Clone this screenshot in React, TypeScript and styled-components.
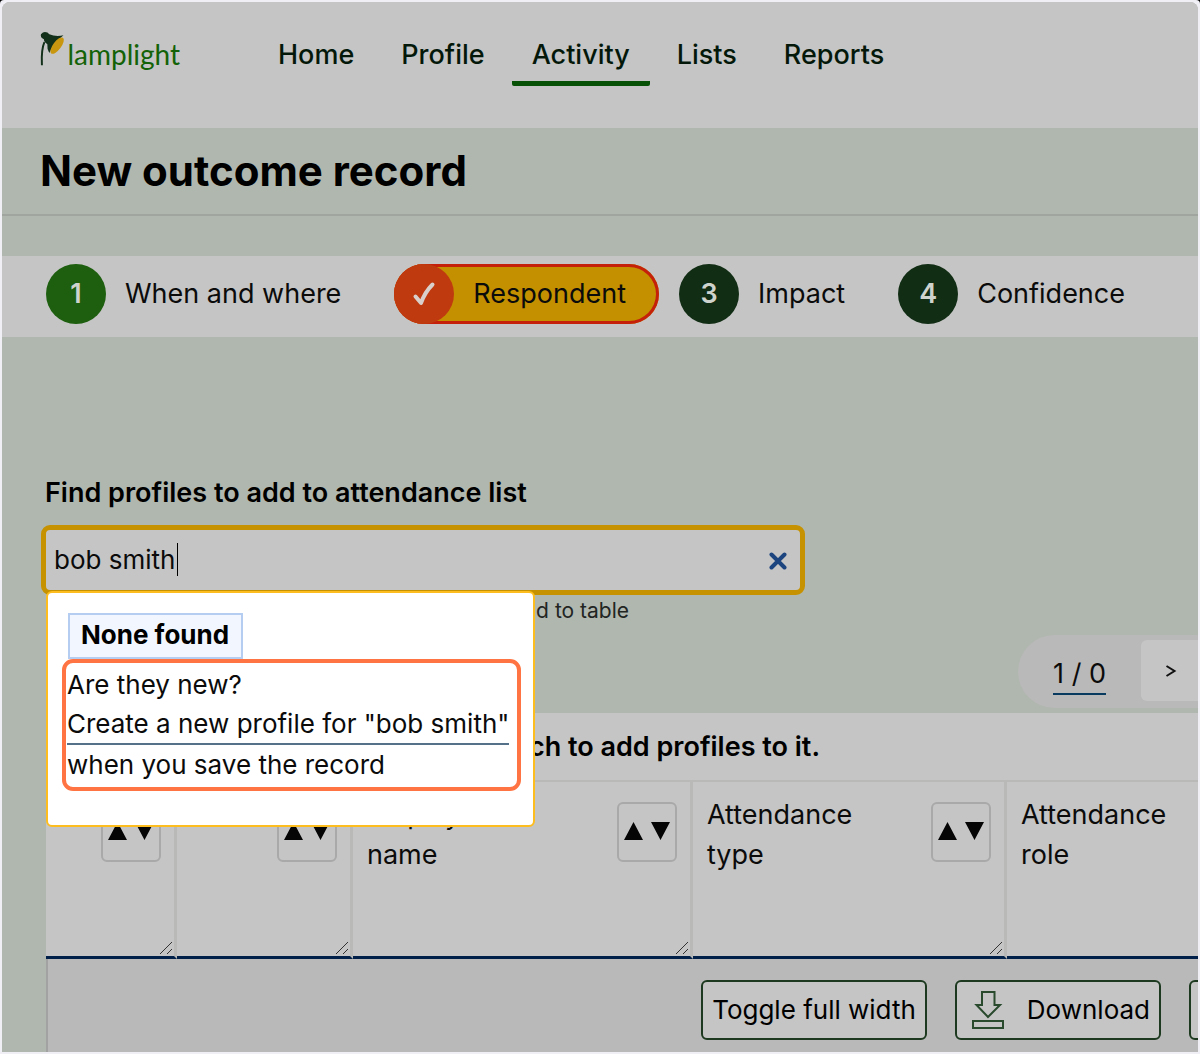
import React from "react";
import styled, { createGlobalStyle } from "styled-components";

const surface = "#c5c5c5";
const sage = "#b0b7af";
const shade = "#b9b9b9";

const GlobalStyle = createGlobalStyle`
  *, *::before, *::after { box-sizing: border-box; }
  body {
    margin: 0;
    background: #000;
    color: #0b0b0b;
    font-family: Inter, "Noto Sans", sans-serif;
    font-size: 26px;
    line-height: 40px;
  }
  button, input { font: inherit; color: inherit; }
  a { color: inherit; text-decoration: none; }
`;

const Frame = styled.div`
  min-height: 100vh;
  padding: 2px;
  display: flex;
  flex-direction: column;
  background: #efeff5;
  border-radius: 4px 4px 0 0;
`;

const Page = styled.div`
  flex: 1;
  display: flex;
  flex-direction: column;
  overflow: hidden;
  background: ${sage};
  border-radius: 8px 8px 0 0;
`;

const Header = styled.header`
  display: flex;
  height: 126px;
  padding: 28px 38px 0;
  gap: 78px;
  background: ${surface};
`;

const Logo = styled.a`
  display: flex;
  align-items: flex-start;
  height: 44px;
  width: 140px;
  color: #136207;
  font-family: Lato, sans-serif;
  font-size: 28px;
  line-height: 48px;
`;

const Nav = styled.nav`
  display: flex;
  align-items: flex-start;
  gap: 7px;
`;

const NavLink = styled.a<{ $active?: boolean }>`
  height: 56px;
  padding: 5px 20px 0;
  border-bottom: 5px solid ${(p) => (p.$active ? "#075107" : "transparent")};
  border-radius: 2px;
  color: #04180a;
  font-size: 27px;
  font-weight: 500;
`;

const TitleBar = styled.div`
  height: 88px;
  padding: 17px 38px;
  border-bottom: 2px solid #a1a5a0;
`;

const Title = styled.h1`
  margin: 0;
  color: #000;
  font-size: 42px;
  line-height: 52px;
  font-weight: 700;
`;

const Steps = styled.ol`
  display: flex;
  gap: 20px;
  height: 81px;
  margin: 40px 0 0;
  padding: 8px 44px 0;
  background: ${surface};
  font-size: 27px;
  list-style: none;
`;

const Step = styled.li<{ $current?: boolean }>`
  display: flex;
  align-items: center;
  flex: none;
  gap: 19px;
  height: 60px;
  padding-right: 33px;
  border-radius: 30px;
  background: ${(p) => (p.$current ? "#c49000" : "transparent")};
  box-shadow: ${(p) => (p.$current ? "inset 0 0 0 3px #c4200a" : "none")};
`;

const StepMark = styled.span<{ $tone: string }>`
  display: flex;
  align-items: center;
  justify-content: center;
  width: 60px;
  height: 60px;
  border-radius: 50%;
  background: ${(p) => p.$tone};
  color: #cfd3cd;
  font-weight: 600;
`;

const Search = styled.section`
  display: flex;
  flex-direction: column;
  align-items: flex-start;
  padding: 136px 39px 0;
`;

const FieldLabel = styled.label`
  padding-left: 4px;
  color: #000;
  font-size: 27px;
  font-weight: 600;
`;

const Field = styled.div`
  position: relative;
  width: 764px;
  max-width: 100%;
  margin-top: 12px;
`;

const TextBox = styled.input`
  display: block;
  width: 100%;
  height: 70px;
  padding: 0 60px 2px 8px;
  border: 5px solid #c69200;
  border-radius: 9px;
  outline: none;
  background: ${surface};
`;

const Caret = styled.span`
  position: absolute;
  left: 136px;
  top: 18px;
  width: 1px;
  height: 33px;
  background: #000;
`;

const Clear = styled.button`
  position: absolute;
  right: 12px;
  top: 21px;
  display: flex;
  align-items: center;
  justify-content: center;
  width: 30px;
  height: 30px;
  padding: 0;
  border: 0;
  background: none;
`;

const Popup = styled.div`
  position: absolute;
  z-index: 2;
  left: 5px;
  top: 66px;
  width: 489px;
  padding: 20px 12px 34px 14px;
  border: 2px solid #fdbd1e;
  border-radius: 6px;
  background: #fff;
`;

const Badge = styled.strong`
  display: block;
  width: fit-content;
  margin-left: 6px;
  padding: 0 12px 2px 11px;
  border: 2px solid #b5cdf0;
  background: #f1f6ff;
  color: #000;
  font-weight: 700;
`;

const Prompt = styled.div`
  padding: 2px 0 2px 1px;
  border: 4px solid #ff7442;
  border-radius: 11px;
  white-space: nowrap;
`;

const PromptLink = styled.a`
  display: block;
  width: fit-content;
  border-bottom: 2px solid #557089;
  line-height: 38px;
`;

const Hint = styled.p`
  width: 588px;
  margin: 0;
  color: #222522;
  font-size: 21px;
  line-height: 32px;
  text-align: right;
`;

const PagerRow = styled.div`
  display: flex;
  justify-content: flex-end;
  margin-top: 8px;
`;

const Pager = styled.div`
  display: flex;
  align-items: flex-start;
  gap: 35px;
  height: 73px;
  padding: 5px 0 0 35px;
  border-radius: 37px 0 0 37px;
  background: ${shade};
`;

const PageCount = styled.a`
  margin-top: 15px;
  border-bottom: 2px solid #073a5e;
  font-size: 27px;
  line-height: 38px;
`;

const Next = styled.button`
  display: flex;
  align-items: center;
  width: 57px;
  height: 61px;
  padding: 0 0 0 24px;
  border: 0;
  border-radius: 6px 0 0 6px;
  background: ${surface};
`;

const TablePanel = styled.section`
  flex: 1;
  display: flex;
  flex-direction: column;
  margin: 5px 0 0 44px;
  overflow: hidden;
  background: ${surface};
`;

const Table = styled.table`
  width: 1300px;
  table-layout: fixed;
  border-collapse: separate;
  border-spacing: 0;
`;

const Caption = styled.caption`
  height: 67px;
  width: 774px;
  padding-top: 14px;
  color: #000;
  font-size: 27px;
  font-weight: 600;
  text-align: right;
`;

const HeadCell = styled.th<{ $width: number }>`
  position: relative;
  width: ${(p) => p.$width}px;
  height: 179px;
  padding: 13px 13px 0 14px;
  border-top: 2px solid #b9b9b7;
  border-right: 3px solid #b9b9b7;
  border-bottom: 3px solid #00204a;
  font-size: 27px;
  font-weight: 400;
  text-align: left;
  vertical-align: top;
`;

const HeadContent = styled.div`
  display: flex;
  justify-content: space-between;
`;

const HeadLabel = styled.span`
  max-width: 160px;
`;

const Sort = styled.button`
  flex: none;
  width: 60px;
  height: 60px;
  margin-top: 7px;
  padding: 0;
  border: 2px solid #a9a9a9;
  border-radius: 6px;
  background: none;
`;

const Grip = styled.svg`
  position: absolute;
  right: 1px;
  bottom: 1px;
`;

const Toolbar = styled.div`
  flex: 1;
  display: flex;
  justify-content: flex-end;
  gap: 28px;
  min-height: 93px;
  padding: 21px 0 12px;
  border-left: 2px solid #a2a2a2;
  background: ${shade};
`;

const ToolButton = styled.button<{ $cut?: boolean }>`
  display: flex;
  align-items: center;
  flex: none;
  gap: 23px;
  height: 60px;
  min-width: 60px;
  margin-right: ${(p) => (p.$cut ? "-51px" : "0")};
  padding: 0 9px;
  border: 2px solid #1d3a20;
  border-radius: 6px;
  background: ${surface};
  color: #000;
`;

const LampIcon = () => (
  <svg width="28" height="42" viewBox="0 0 28 42" aria-hidden="true">
    <path d="M4.500 12 C1 20 1.800 30 2 35.500" fill="none" stroke="#12301a" strokeWidth="2" />
    <path d="M1 4 Q3 1.500 5 1.500 Q8 1.500 9.500 4 Q16 6.500 24 5 Q19 9 15 14 Q11 19 9.500 23 Q7 19 7.500 14 Q4 12 4 9 Q0 7.500 1 4Z" fill="#12301a" />
    <ellipse cx="17.500" cy="15.500" rx="10" ry="4.200" transform="rotate(-53 17.500 15.500)" fill="#c8960f" />
  </svg>
);

const SortIcon = () => (
  <svg width="56" height="56" viewBox="0 0 56 56" aria-hidden="true" style={{ display: "block" }}>
    <path d="M5 36 L14.5 18 L24 36Z M32 18 H51 L41.5 36Z" fill="#050505" />
  </svg>
);

const DownloadIcon = () => (
  <svg width="32" height="40" viewBox="0 0 32 40" fill="none" stroke="#294a2d" strokeWidth="2" aria-hidden="true" style={{ marginLeft: 6 }}>
    <path d="M10 2 H22.5 V15 H28 L16 27 L4.500 15 H10Z M1 31 H31 V38 H1Z" />
  </svg>
);

const links = ["Home", "Profile", "Activity", "Lists", "Reports"];

const columns = [
  { label: "ID", width: 131 },
  { label: "Photo", width: 176 },
  { label: "Display name", width: 340 },
  { label: "Attendance type", width: 314 },
  { label: "Attendance role", width: 339 },
];

export default function App() {
  return (
    <Frame>
      <GlobalStyle />
      <Page>
        <Header>
          <Logo href="#">
            <LampIcon />
            lamplight
          </Logo>
          <Nav>
            {links.map((name) => (
              <NavLink key={name} href="#" $active={name === "Activity"}>
                {name}
              </NavLink>
            ))}
          </Nav>
        </Header>
        <TitleBar>
          <Title>New outcome record</Title>
        </TitleBar>
        <Steps>
          <Step>
            <StepMark $tone="#1d5f0f">1</StepMark>
            When and where
          </Step>
          <Step $current>
            <StepMark $tone="#bf3a0f">
              <svg width="24" height="26" viewBox="0 0 24 26" aria-hidden="true">
                <path d="M3.500 15.500 L9 22 Q13 11 20.500 3.500" fill="none" stroke="#d9d0cb" strokeWidth="4" strokeLinecap="round" strokeLinejoin="round" />
              </svg>
            </StepMark>
            Respondent
          </Step>
          <Step>
            <StepMark $tone="#112d14">3</StepMark>
            Impact
          </Step>
          <Step>
            <StepMark $tone="#112d14">4</StepMark>
            Confidence
          </Step>
        </Steps>
        <Search>
          <FieldLabel htmlFor="find">Find profiles to add to attendance list</FieldLabel>
          <Field>
            <TextBox id="find" type="text" defaultValue="bob smith" />
            <Caret />
            <Clear type="button" aria-label="Clear">
              <svg width="18" height="18" viewBox="0 0 18 18" aria-hidden="true">
                <path d="M2.500 2.500 L15.500 15.500 M15.500 2.500 L2.500 15.500" stroke="#1c447f" strokeWidth="4" strokeLinecap="round" />
              </svg>
            </Clear>
            <Popup>
              <Badge>None found</Badge>
              <Prompt>
                <div>Are they new?</div>
                <PromptLink href="#">Create a new profile for "bob smith"</PromptLink>
                <div>when you save the record</div>
              </Prompt>
            </Popup>
          </Field>
          <Hint>Search and add to table</Hint>
        </Search>
        <PagerRow>
          <Pager>
            <PageCount href="#">1 / 0</PageCount>
            <Next type="button" aria-label="Next page">
              <svg width="12" height="14" viewBox="0 0 12 14" fill="none" stroke="#111" strokeWidth="2" aria-hidden="true">
                <path d="M1.500 2 L9.500 7 L1.500 12" />
              </svg>
            </Next>
          </Pager>
        </PagerRow>
        <TablePanel>
          <Table>
            <Caption>Use the search to add profiles to it.</Caption>
            <thead>
              <tr>
                {columns.map((c) => (
                  <HeadCell key={c.label} $width={c.width} scope="col">
                    <HeadContent>
                      <HeadLabel>{c.label}</HeadLabel>
                      <Sort type="button" aria-label={`Sort by ${c.label}`}>
                        <SortIcon />
                      </Sort>
                    </HeadContent>
                    <Grip width="14" height="14" viewBox="0 0 14 14" fill="none" stroke="#333" strokeWidth="1" aria-hidden="true">
                      <path d="M1 13 L13 1 M8 13 L13 8" />
                    </Grip>
                  </HeadCell>
                ))}
              </tr>
            </thead>
          </Table>
          <Toolbar>
            <ToolButton type="button">Toggle full width</ToolButton>
            <ToolButton type="button">
              <DownloadIcon />
              Download
            </ToolButton>
            <ToolButton type="button" $cut aria-label="More" />
          </Toolbar>
        </TablePanel>
      </Page>
    </Frame>
  );
}
